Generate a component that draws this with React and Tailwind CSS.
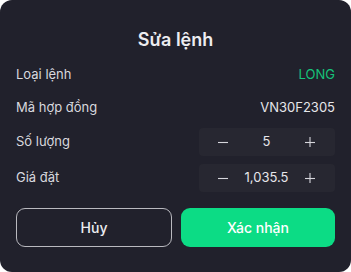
import React from "react";

function Minus() {
  return (
    <svg width="10" height="10" viewBox="0 0 10 10" className="block">
      <line x1="0" y1="5.5" x2="10" y2="5.5" stroke="#d6d6dc" strokeWidth="1.1" />
    </svg>
  );
}

function Plus() {
  return (
    <svg width="10" height="10" viewBox="0 0 10 10" className="block">
      <line x1="0" y1="5.5" x2="10" y2="5.5" stroke="#d6d6dc" strokeWidth="1.1" />
      <line x1="5" y1="0" x2="5" y2="11" stroke="#d6d6dc" strokeWidth="1.1" />
    </svg>
  );
}

function Stepper({ value }) {
  return (
    <div className="flex h-[28px] w-[136px] items-center justify-between rounded-[4px] bg-[#272731] pl-[19px] pr-[20px] text-[13px] text-[#e6e6ea]">
      <Minus />
      <span>{value}</span>
      <Plus />
    </div>
  );
}

export default function App() {
  return (
    <div className="h-[272px] w-[351px] bg-white" style={{ fontFamily: "Inter, 'Noto Sans', sans-serif" }}>
      <div className="flex h-full w-full flex-col rounded-[12px] bg-[#21212c] px-4">
        <div className="mt-[28px] h-6 text-center text-[18px] font-semibold leading-6 text-[#ececf0]">Sửa lệnh</div>
        <div className="mt-[9px] flex h-[28px] items-center justify-between text-[13px]">
          <span className="text-[#d8d8de]">Loại lệnh</span>
          <span className="text-[#16c27a]">LONG</span>
        </div>
        <div className="mt-[5px] flex h-[28px] items-center justify-between text-[13px]">
          <span className="text-[#d8d8de]">Mã hợp đồng</span>
          <span className="text-[#e6e6ea]">VN30F2305</span>
        </div>
        <div className="mt-[6px] flex h-[28px] items-center justify-between text-[13px]">
          <span className="text-[#d8d8de]">Số lượng</span>
          <Stepper value="5" />
        </div>
        <div className="mt-[8px] flex h-[28px] items-center justify-between text-[13px]">
          <span className="text-[#d8d8de]">Giá đặt</span>
          <Stepper value="1,035.5" />
        </div>
        <div className="mt-[16px] flex gap-[9px]">
          <button className="flex h-[39px] flex-1 items-center justify-center rounded-[9px] border border-[#b9b9bf] text-[14px] font-medium text-[#ececf0]">Hủy</button>
          <button className="flex h-[39px] flex-1 items-center justify-center rounded-[9px] bg-[#0cdc85] text-[14px] font-medium text-white">Xác nhận</button>
        </div>
      </div>
    </div>
  );
}
